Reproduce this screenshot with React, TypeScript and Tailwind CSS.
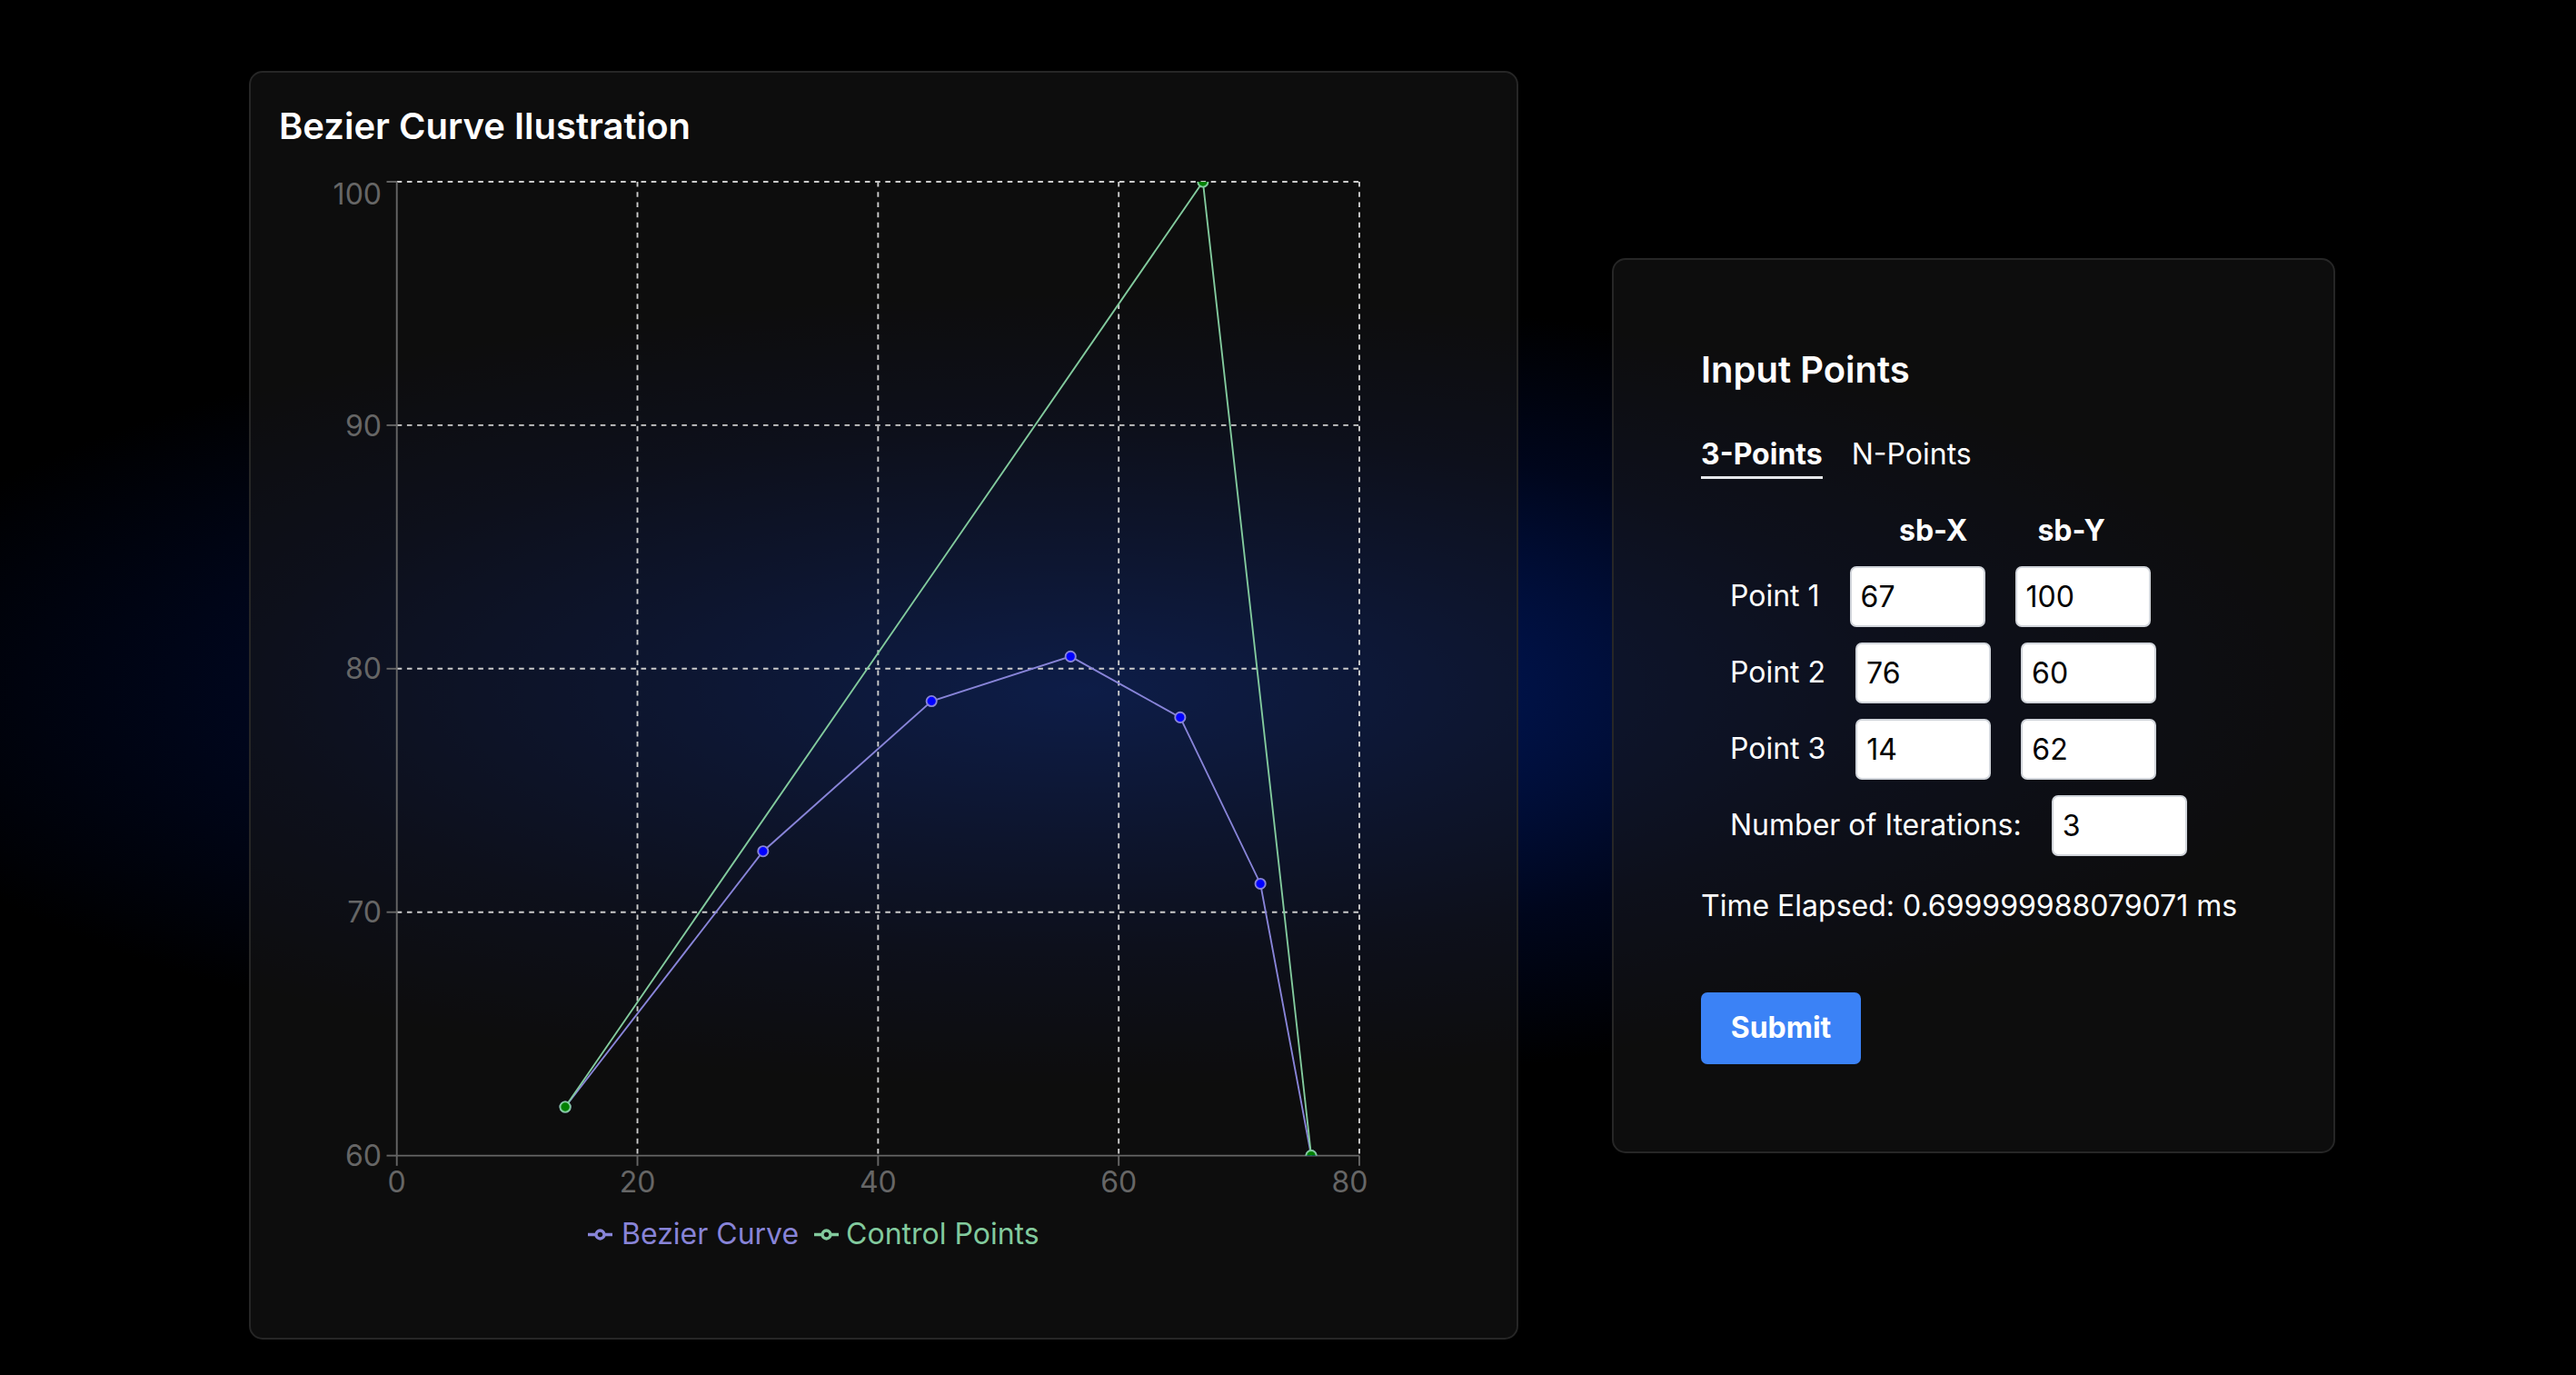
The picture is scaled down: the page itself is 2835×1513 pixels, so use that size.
import React from 'react';

const CONTROL = [
  { x: 14, y: 62 },
  { x: 67, y: 100 },
  { x: 76, y: 60 },
];

// plot box inside the svg
const PX0 = 129.7;
const PX1 = 1189;
const PY0 = 20;
const PY1 = 1091.6;

const sx = (v: number) => PX0 + (v / 80) * (PX1 - PX0);
const sy = (v: number) => PY0 + ((100 - v) / 40) * (PY1 - PY0);

function bezierPoints(steps: number) {
  const [a, b, c] = CONTROL;
  const out: { x: number; y: number }[] = [];
  for (let k = 0; k <= steps; k++) {
    const t = k / steps;
    const u = 1 - t;
    out.push({
      x: u * u * a.x + 2 * u * t * b.x + t * t * c.x,
      y: u * u * a.y + 2 * u * t * b.y + t * t * c.y,
    });
  }
  return out;
}

function toPath(pts: { x: number; y: number }[]) {
  return pts.map((p, i) => `${i === 0 ? 'M' : 'L'}${sx(p.x)},${sy(p.y)}`).join(' ');
}

function LegendIcon({ color }: { color: string }) {
  return (
    <svg width="27" height="27" viewBox="0 0 32 32" className="shrink-0">
      <path
        strokeWidth="4"
        fill="none"
        stroke={color}
        d="M0,16h10.67A5.33,5.33,0,1,1,21.33,16H32M21.33,16A5.33,5.33,0,1,1,10.67,16"
      />
    </svg>
  );
}

function BezierChart() {
  const curve = bezierPoints(6);
  const yTicks = [100, 90, 80, 70, 60];
  const xTicks = [0, 20, 40, 60, 80];

  return (
    <div>
      <svg width="1240" height="1150" className="block mt-[17px]">
        <defs>
          <clipPath id="plot">
            <rect x={PX0} y={PY0} width={PX1 - PX0} height={PY1 - PY0} />
          </clipPath>
        </defs>

        {/* grid */}
        <g stroke="#cccccc" strokeWidth="1.9" strokeDasharray="5.6 5.6">
          {[100, 90, 80, 70].map(v => (
            <line key={`h${v}`} x1={PX0} x2={PX1} y1={sy(v)} y2={sy(v)} />
          ))}
          {[20, 40, 60, 80].map(v => (
            <line key={`v${v}`} x1={sx(v)} x2={sx(v)} y1={PY0} y2={PY1} />
          ))}
        </g>

        {/* axes */}
        <g stroke="#666666" strokeWidth="1.9">
          <line x1={PX0} x2={PX0} y1={PY0} y2={PY1} />
          <line x1={PX0} x2={PX1} y1={PY1} y2={PY1} />
          {yTicks.map(v => (
            <line key={`yt${v}`} x1={PX0 - 11.2} x2={PX0} y1={sy(v)} y2={sy(v)} />
          ))}
          {xTicks.map(v => (
            <line key={`xt${v}`} x1={sx(v)} x2={sx(v)} y1={PY1} y2={PY1 + 11.2} />
          ))}
        </g>

        <g fill="#666666" fontSize="32">
          {yTicks.map(v => (
            <text key={`yl${v}`} x={113} y={v === 100 ? 45 : sy(v) + 11.6} textAnchor="end">
              {v}
            </text>
          ))}
          {xTicks.map(v => (
            <text
              key={`xl${v}`}
              x={v === 80 ? 1198.5 : sx(v)}
              y={1131.7}
              textAnchor={v === 80 ? 'end' : 'middle'}
            >
              {v}
            </text>
          ))}
        </g>

        <g clipPath="url(#plot)">
          <path d={toPath(curve)} fill="none" stroke="#8884d8" strokeWidth="1.9" />
          {curve.map((p, i) => (
            <circle key={`b${i}`} cx={sx(p.x)} cy={sy(p.y)} r="5.6" fill="blue" stroke="#8884d8" strokeWidth="1.9" />
          ))}
          <path d={toPath(CONTROL)} fill="none" stroke="#82ca9d" strokeWidth="1.9" />
          {CONTROL.map((p, i) => (
            <circle key={`c${i}`} cx={sx(p.x)} cy={sy(p.y)} r="5.6" fill="green" stroke="#82ca9d" strokeWidth="1.9" />
          ))}
        </g>
      </svg>

      <div className="flex items-center pl-[340px] mt-[9px] text-[32px] leading-[38px]">
        <LegendIcon color="#8884d8" />
        <span className="ml-[10px] text-[#8884d8]">Bezier Curve</span>
        <span className="ml-[17px]"><LegendIcon color="#82ca9d" /></span>
        <span className="ml-[8px] text-[#82ca9d]">Control Points</span>
      </div>
    </div>
  );
}

function PointInput({ value, className = '' }: { value: string; className?: string }) {
  return (
    <input
      type="text"
      defaultValue={value}
      className={`w-[149px] h-[67px] rounded-[7px] bg-white border-2 border-[#d1d5db] px-[10px] text-[32px] text-black outline-none ${className}`}
    />
  );
}

function PointRow({ label, x, y }: { label: string; x: string; y: string }) {
  return (
    <div className="flex items-center mt-[17px] first:mt-0">
      <span className="ml-[32px] mr-[33px] leading-[38px]">{label}</span>
      <PointInput value={x} />
      <PointInput value={y} className="ml-[33px]" />
    </div>
  );
}

export default function App() {
  return (
    <div className="min-h-screen w-full bg-black bg-[radial-gradient(ellipse_1400px_440px_at_1190px_760px,rgb(0,32,118)_0%,rgb(0,16,64)_38%,rgb(0,6,28)_66%,transparent_100%)] font-['Inter','Noto_Sans',sans-serif] text-white">
      <div className="flex items-center gap-[103px] pl-[274px] pt-[78px]">

        <div className="w-[1397px] h-[1396px] shrink-0 rounded-[15px] border-2 border-[#262626] bg-[#1a1a1a]/50 pl-[31px] pt-[35px]">
          <h1 className="text-[40px] leading-[48px] font-semibold">Bezier Curve Ilustration</h1>
          <BezierChart />
        </div>

        <div className="w-[796px] h-[985px] shrink-0 rounded-[15px] border-2 border-[#262626] bg-[#1a1a1a]/50 pl-[96px] pt-[97px] text-[32px]">
          <h2 className="text-[40px] leading-[48px] font-semibold">Input Points</h2>

          <div className="flex items-start gap-[32px] mt-[50px] leading-[38px]">
            <span className="font-bold pb-[5px] border-b-[3px] border-[#e5e7eb]">3-Points</span>
            <span>N-Points</span>
          </div>

          <div className="flex mt-[38px] leading-[38px] font-bold">
            <span className="ml-[218px]">sb-X</span>
            <span className="ml-[77px]">sb-Y</span>
          </div>

          <div className="mt-[20px]">
            <PointRow label="Point 1" x="67" y="100" />
            <PointRow label="Point 2" x="76" y="60" />
            <PointRow label="Point 3" x="14" y="62" />
            <div className="flex items-center mt-[17px]">
              <span className="ml-[32px] mr-[33px] leading-[38px]">Number of Iterations:</span>
              <PointInput value="3" />
            </div>
          </div>

          <p className="mt-[36px] leading-[38px]">Time Elapsed: 0.699999988079071 ms</p>

          <button
            type="button"
            className="mt-[76px] w-[176px] h-[79px] rounded-[7px] bg-[#3b82f6] font-bold text-white"
          >
            Submit
          </button>
        </div>

      </div>
    </div>
  );
}
